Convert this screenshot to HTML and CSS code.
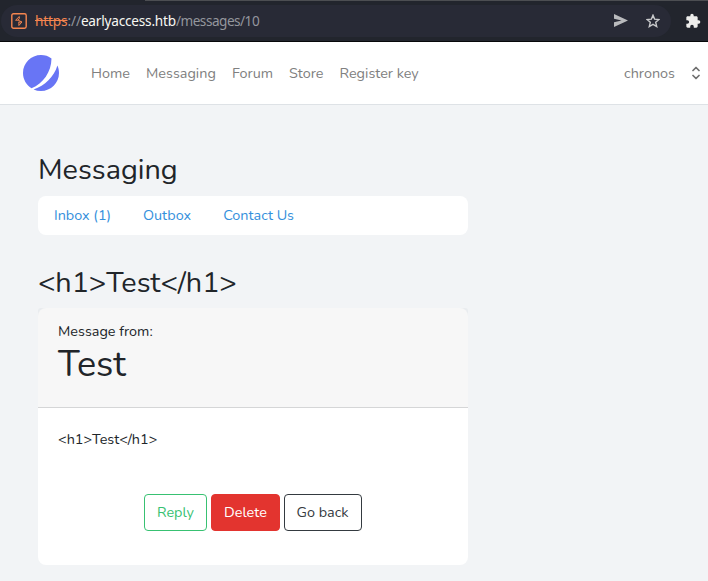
FILE: index.html
```html
<!DOCTYPE html>
<html lang="en">
<head>
<meta charset="utf-8">
<title>Messaging</title>
<link rel="stylesheet" href="styles.css">
</head>
<body>
<div class="toolbar">
  <div class="address">
    <svg class="burp" width="16" height="16" viewBox="0 0 16 16"><rect x=".8" y=".8" width="14.4" height="14.4" rx="1.700" fill="none" stroke="#f5854f" stroke-width="1.4"/><path d="M8.300 3.500 4.600 7.200H7.200L8.300 5.400zM7.200 7.200 10.900 9H7.600M10.900 9 7.900 12.500V9" fill="none" stroke="#f5854f" stroke-width="1"/></svg>
    <div class="url"><span class="scheme">https</span>://<span class="host">earlyaccess.htb</span><span class="path">/messages/10</span></div>
    <svg class="send" width="14" height="13" viewBox="0 0 14 13"><path d="M0 0 14 6.5 0 13V8.2l7.5-1.7L0 4.8z" fill="#b9babd"/></svg>
    <svg class="star" width="14" height="14" viewBox="0 0 14 14"><path d="m7 1.2 1.6 3.9 4.3.4-3.2 2.8 1 4.2L7 10.3l-3.7 2.2 1-4.2L1.100 5.500l4.300-.4z" fill="none" stroke="#c8c9cb" stroke-width="1.4"/></svg>
  </div>
  <svg class="puzzle" width="16" height="16" viewBox="0 0 24 24"><path d="M20.500 11H19V7c0-1.100-.9-2-2-2h-4V3.500a2.500 2.500 0 0 0-5 0V5H4c-1.100 0-2 .9-2 2v3.800h1.500a2.700 2.700 0 0 1 0 5.400H2V20c0 1.100.9 2 2 2h3.800v-1.500a2.700 2.700 0 0 1 5.400 0V22H17c1.100 0 2-.9 2-2v-4h1.500a2.500 2.500 0 0 0 0-5z" fill="#eeeeec"/></svg>
</div>
<nav class="navbar">
  <svg class="logo" width="36" height="36" viewBox="0 0 48 48"><path d="M11.395 44.428C4.557 40.198 0 32.632 0 24 0 10.745 10.745 0 24 0a23.891 23.891 0 0 1 13.997 4.502c-.2 17.907-11.097 33.245-26.602 39.926z" fill="#6875f5"/><path d="M14.134 45.885A23.914 23.914 0 0 0 24 48c13.255 0 24-10.745 24-24 0-3.516-.756-6.856-2.115-9.866-4.659 15.143-16.608 27.092-31.750 31.751z" fill="#6875f5"/></svg>
  <div class="links">
    <a class="home">Home</a><a class="msgs">Messaging</a><a class="forum">Forum</a><a class="store">Store</a><a class="key">Register key</a>
  </div>
  <div class="user"><span>chronos</span>
    <svg width="8" height="14" viewBox="0 0 8 14" fill="none" stroke="#6f6f6f" stroke-width="1.700" stroke-linecap="round" stroke-linejoin="round"><path d="M1 4.500 4 1.500l3 3M1 9.500l3 3 3-3"/></svg>
  </div>
</nav>
<main>
  <h2 class="title">Messaging</h2>
  <div class="tabs"><a class="inbox">Inbox (1)</a><a class="outbox">Outbox</a><a class="contact">Contact Us</a></div>
  <h2 class="subject">&lt;h1&gt;Test&lt;/h1&gt;</h2>
  <section class="card">
    <header><div class="from">Message from:</div><h1>Test</h1></header>
    <p class="body">&lt;h1&gt;Test&lt;/h1&gt;</p>
    <div class="actions"><a class="btn reply">Reply</a><a class="btn delete">Delete</a><a class="btn back">Go back</a></div>
  </section>
</main>
</body>
</html>
```
FILE: styles.css
```css
* { box-sizing: border-box; }
body { margin: 0; height: 581px; overflow: hidden; background: #f2f4f6; color: #212529; font: 14.4px/22px Nunito, Lato, sans-serif; }
h1, h2, p { margin: 0; font-weight: 400; }
svg { display: block; flex: none; }
a { white-space: nowrap; }

.toolbar { display: flex; align-items: center; height: 42px; background: linear-gradient(90deg, transparent 145px, #4c4e52 145px) top / 100% 1px no-repeat, #22252d; border-bottom: 1px solid #07080a; }
.address { display: flex; align-items: center; width: 670px; height: 32px; margin-left: 1px; padding-left: 10px; border-radius: 16px; background: #282a36; }
.url { width: 567px; margin-left: 8px; color: #94969d; font: 13.6px/20px "Noto Sans", sans-serif; letter-spacing: -.12px; white-space: nowrap; }
.scheme { color: #f5854f; text-decoration: line-through; }
.host { color: #f8f8f2; letter-spacing: -.2px; }
.path { letter-spacing: -.5px; }
.send { margin-left: 12px; }
.star { margin-left: 18px; }
.puzzle { margin-left: 14px; }

.navbar { display: flex; align-items: center; height: 63px; padding-left: 23px; background: #fff; border-bottom: 1px solid #dee2e6; color: #808080; }
.links { display: flex; width: 533px; margin-left: 32px; }
.home { width: 55px; }
.msgs { width: 86px; }
.forum { width: 57px; }
.store { width: 50.5px; }
.user { display: flex; align-items: center; }
.user span { width: 68px; }

main { width: 430px; margin-left: 38px; padding-top: 48px; }
h2 { height: 34px; font-size: 28.8px; line-height: 34px; white-space: nowrap; }
.tabs { display: flex; height: 39px; margin-top: 9px; padding: 8px 16px; border-radius: 8px; background: #fff; color: #3490dc; }
.inbox { width: 89px; }
.outbox { width: 80.2px; }
.subject { margin-top: 31px; }
.card { height: 257px; margin-top: 8px; border-radius: 3px 3px 8px 8px; background: linear-gradient(#e9ecef 10px, #fff 10px); overflow: hidden; }
header { height: 100px; padding: 12px 20px; border-radius: 8px 8px 0 0; background: linear-gradient(#d5d6d7, #d5d6d7) bottom / 100% 1px no-repeat, #f7f7f7; }
h1 { font-size: 36px; line-height: 45px; }
.body { padding: 20px 20px 0; }
.actions { display: flex; gap: 4px; margin: 44px 0 0 106px; }
.btn { display: flex; align-items: center; justify-content: center; height: 37px; padding-bottom: 2px; border: 1px solid; border-radius: 4px; }
.reply { width: 63px; color: #38c172; }
.delete { width: 69px; color: #fff; background: #e3342f; border-color: #e3342f; }
.back { width: 78px; padding-right: 1px; color: #343a40; }
```
